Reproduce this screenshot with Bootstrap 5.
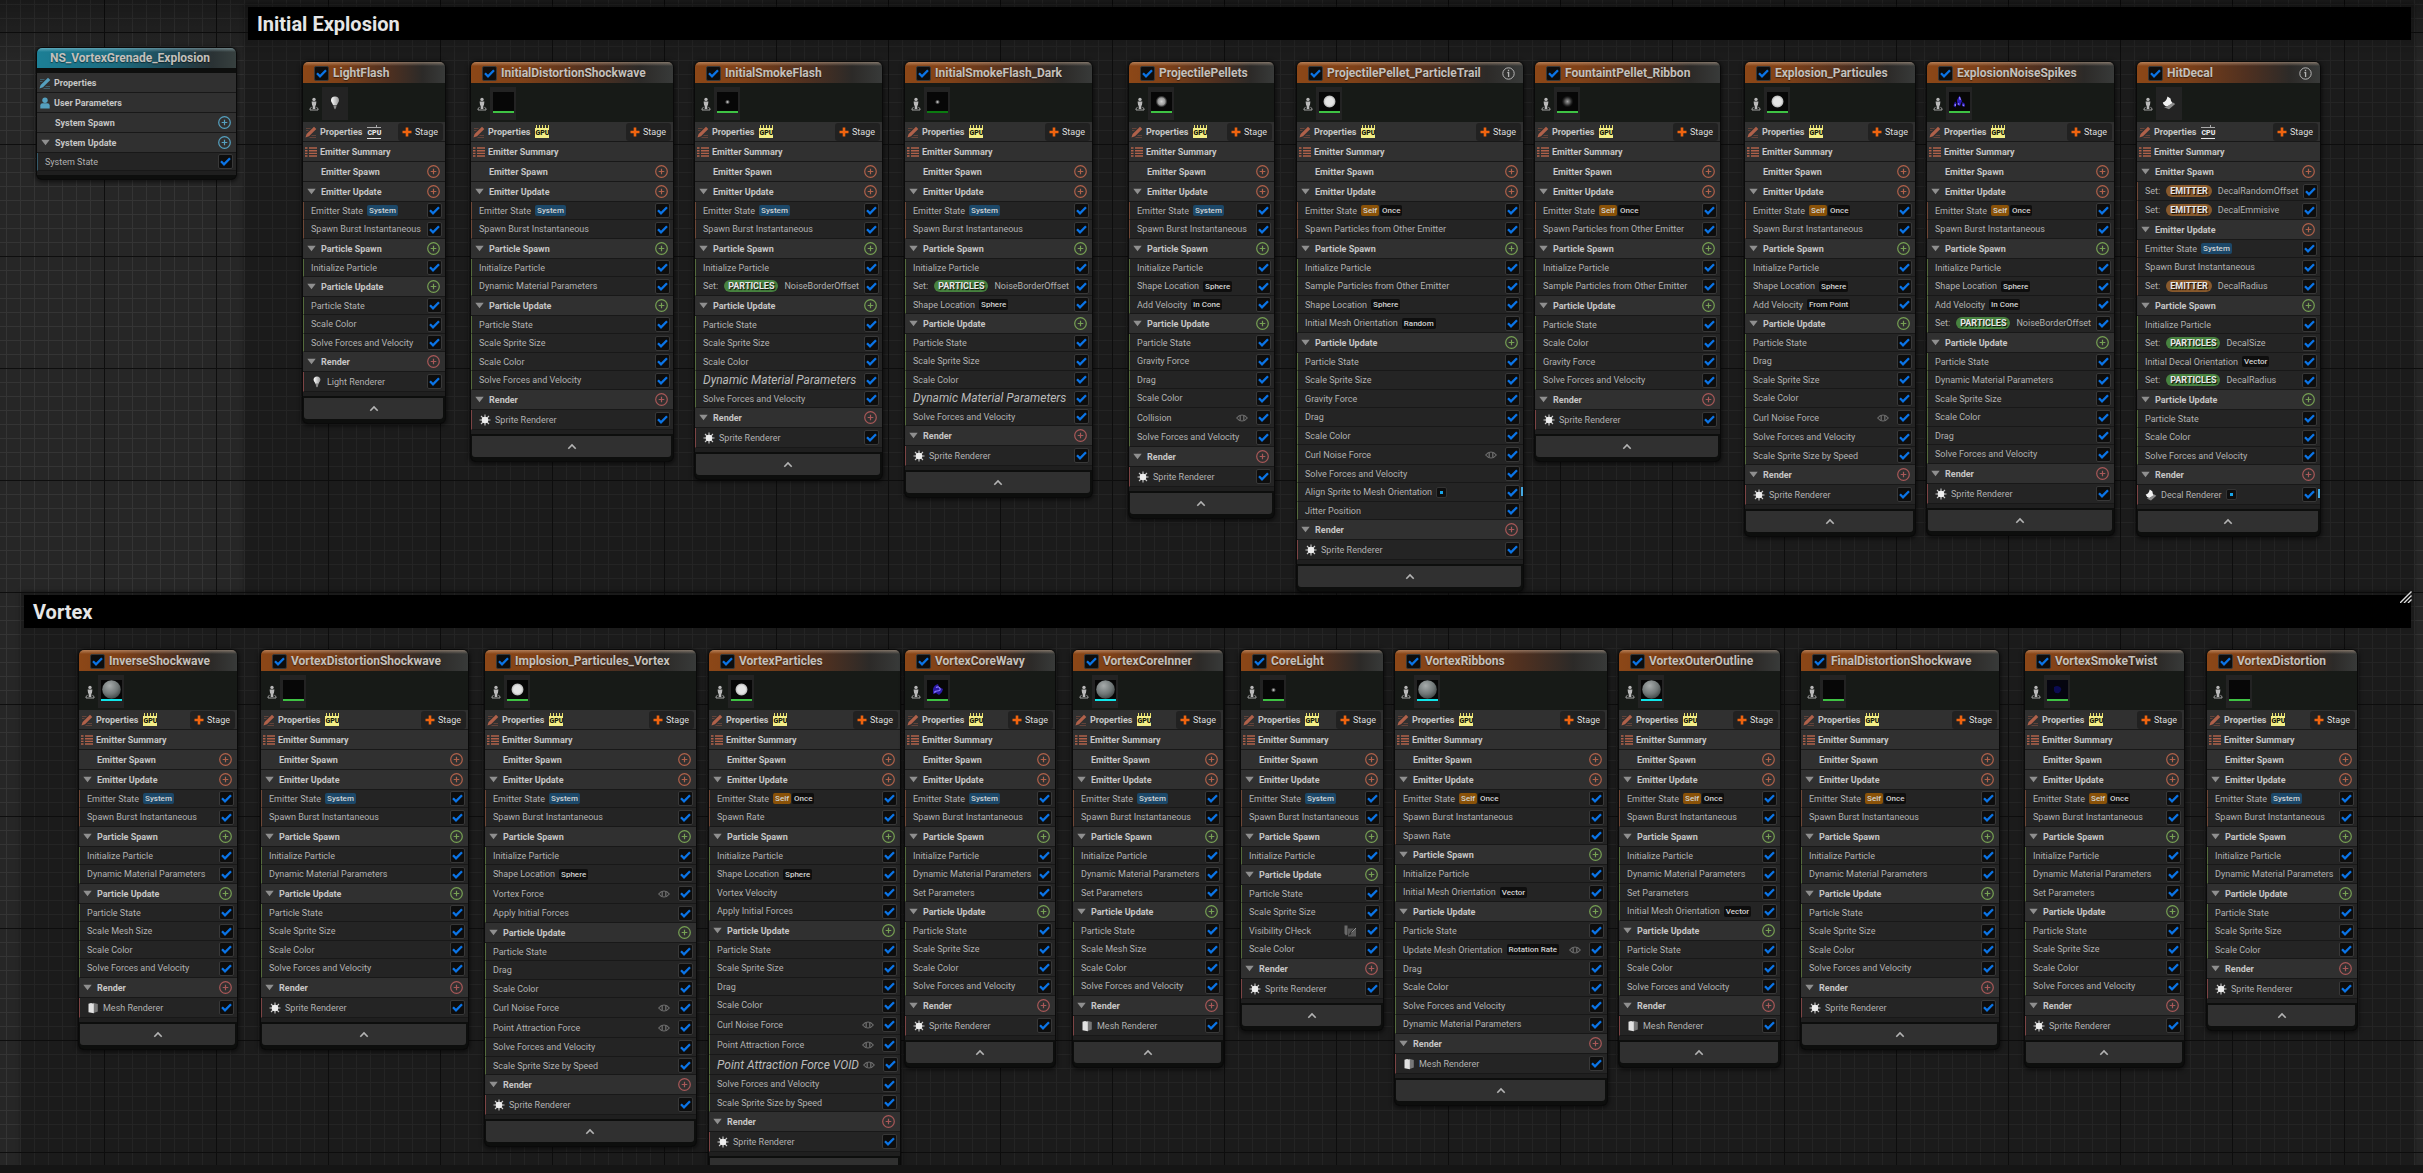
<!DOCTYPE html>
<html lang="en" data-bs-theme="dark">
<head>
<meta charset="utf-8">
<meta name="viewport" content="width=device-width, initial-scale=1">
<title>NS_VortexGrenade_Explosion</title>
<link rel="stylesheet" href="https://cdn.jsdelivr.net/npm/bootstrap@5.3.0/dist/css/bootstrap.min.css">
<style>
  :root { --emitter: #b0614a; --particle: #76a053; --render: #a85858; --system: #55a0bf; }
  body { font-family: Roboto, "Liberation Sans", sans-serif; font-size: 9px; line-height: 12px; color: #b2b2b2; background: #151515; }
  .graph {
    background-color: #262626;
    background-image:
      linear-gradient(rgba(0,0,0,.35), transparent 60px),
      linear-gradient(to right, #0e0e0e 1px, transparent 1px),
      linear-gradient(#0e0e0e 1px, transparent 1px),
      linear-gradient(to right, #343434 1px, transparent 1px),
      linear-gradient(#343434 1px, transparent 1px);
    background-size: auto, 112px 112px, 112px 112px, 14px 14px, 14px 14px;
    background-position: 0 0, 104px 0, 0 32px, 6px 0, 0 4px;
  }
  .status-strip { height: 8px; }
  /* comment boxes */
  .note-box { background: rgba(12,12,12,.4); box-shadow: 0 0 4px rgba(0,0,0,.5); right: 9px; }
  .note-a { left: 245px; top: 4px; height: 588px; }
  .note-b { left: 21px; top: 592px; bottom: 0; }
  .note-title { background: #000; color: #e6e6e6; font-size: 20px; line-height: 31px; margin: 3px 3px 0; padding: 2px 0 0 9px; font-weight: 700; }
  .grip { top: -1px; right: 2px; }
  /* nodes */
  .node { border-radius: 6px 6px 5px 5px; background: #0d0e0d; box-shadow: 0 0 0 1px #0a0a0a, 0 1px 4px 2px rgba(0,0,0,.55); padding-bottom: 4px; }
  .node-head { height: 21px; border-radius: 5px 5px 0 0; padding: 1px 0 0 11px; gap: 4px;
    background: linear-gradient(rgba(255,220,190,.38), rgba(255,220,190,0) 4px), linear-gradient(to right, #8c4717, #7f4118 25%, #4f3020 60%, #2c2a28 84%, #383a39); }
  .node-head h2, .sys-head h2 { font-size: 12px; line-height: 20px; font-weight: 700; color: #c4c0bc; text-shadow: 0 1px 1px rgba(0,0,0,.5); }
  .sys-head { height: 20px; border-radius: 5px 5px 0 0; padding-left: 13px; margin-bottom: 5px;
    background: linear-gradient(rgba(200,240,250,.38), rgba(200,240,250,0) 4px), linear-gradient(to right, #1c7f96, #1d6c80 40%, #1f4450 70%, #2a3234 88%, #37403f); }
  .preview { height: 39px; background: #171a17; padding: 4px 0 2px 6px; gap: 3px; }
  .preview-tile { width: 26px; background: #232323; padding-bottom: 2px; }
  .thumb { width: 21px; height: 21px; background: #070707; border-bottom: 2px solid #3fc244; }
  .thumb-cyan { border-color: #11e6ea; }
  .thumb-dim { border-color: #0b7a10; }
  .group-row, .mod-row { border-bottom: 1px solid #181818; white-space: nowrap; }
  .group-row { height: 20px; background: #303030; color: #c6c6c6; font-weight: 700; padding-right: 5px; }
  .group-row .lead-slot { width: 18px; padding-left: 4px; }
  .group-row .icon-slot { width: 17px; padding-left: 2px; }
  .icon-emitter { color: var(--emitter); }
  .icon-system { color: var(--system); }
  .mod-row { height: 18px; background: #242424; padding: 0 3px 0 7px; border-left: 1px solid var(--tone); gap: 4px; }
  .mod-row:nth-child(even), .mod-row.set-row { height: 19px; }
  .mod-row.debug-row, .mod-row.render-row { height: 20px; }
  .mod-row .ital { font-size: 12px; font-style: italic; color: #bcbcbc; }
  .tone-emitter { --tone: #6e4736; --ring: var(--emitter); }
  .tone-particle { --tone: #546a3c; --ring: var(--particle); }
  .tone-render { --tone: #7c4444; --ring: var(--render); }
  .tone-system { --tone: #33596a; --ring: var(--system); }
  .plain-btn { border: 0; padding: 0; background: none; color: #8f8f8f; line-height: 0; }
  .ring-btn { width: 13px; height: 13px; color: var(--ring); }
  .form-check-input.tick { width: 15px; height: 15px; margin: 0; border: 1px solid #383838; border-radius: 2px; background-color: #0d0d0d; }
  .form-check-input.tick:checked { background-color: #0d0d0d; border-color: #383838;
    background-size: 13px 13px; background-image: url("data:image/svg+xml,%3Csvg xmlns='http://www.w3.org/2000/svg' viewBox='0 0 13 13'%3E%3Cpath d='M2 6.3 5 9.4 11 3.2' fill='none' stroke='%230b74e6' stroke-width='2.3'/%3E%3C/svg%3E"); }
  .stage-btn { height: 18px; width: 45px; border: 0; border-radius: 3px; background: #212121; color: #dedede; padding: 0 5px 0 4px; margin-right: -3px; }
  .chip { font-size: 8px; line-height: 11px; border-radius: 2px; padding: 0 2px; background: #0e0e0e; color: #d2d2d2; font-weight: 500; }
  .chip-system { background: #1c4869; }
  .chip-self { background: #8a5208; }
  .chip + .chip { margin-left: -3px; }
  .pill { font-size: 9px; line-height: 12px; border-radius: 6px; padding: 0 4px; color: #e8e8e8; font-weight: 700; text-shadow: 1px 1px 1px #000; background: #47823f; margin: 0 2px; }
  .pill-emitter { background: #88592c; }
  .dot-chip { width: 11px; height: 11px; border-radius: 2px; background: #0e0e0e; border: 1px solid #333; }
  .dot-chip::after { content: ""; width: 3px; height: 3px; background: #19a5e8; }
  .edge-mark { right: 0; top: 4px; width: 2px; height: 9px; background: #45a9e2; }
  .sim-chip { font-size: 7px; line-height: 8px; width: 14px; height: 14px; padding-top: 4px; font-weight: 900; text-align: center; margin-left: 5px; }
  .sim-gpu { color: #15150a; background: repeating-linear-gradient(to right, transparent 0 1px, #e8df6a 1px 2px, transparent 2px 3px) 0 0/14px 3px no-repeat, linear-gradient(#f3ee86,#f3ee86) 0 3px/14px 10px no-repeat; }
  .sim-cpu { color: #e6e6e6; background: linear-gradient(#aaa,#aaa) 0 2px/14px 1px no-repeat, linear-gradient(#e6e6e6,#e6e6e6) 0 13px/14px 1px no-repeat, linear-gradient(#aaa,#aaa) 9px 0/1px 3px no-repeat; }
  .base-strip { height: 4px; background: #1f1f1f; margin-bottom: 2px; }
  .fold-btn { height: 21px; border: 0; border-radius: 0 0 3px 3px; background: #303030; color: #b4b4b4; margin: 0 2px 0 1px; padding: 0; line-height: 0; }
</style>
</head>
<body class="d-flex flex-column vh-100 overflow-hidden">

<svg width="0" height="0" class="position-absolute" aria-hidden="true">
  <defs>
    <radialGradient id="gBall"><stop offset=".6" stop-color="#e4e4e4"/><stop offset=".85" stop-color="#bbb"/><stop offset="1" stop-color="#888" stop-opacity="0"/></radialGradient>
    <radialGradient id="gDot"><stop offset="0" stop-color="#f0f0f0"/><stop offset="1" stop-color="#888" stop-opacity="0"/></radialGradient>
    <radialGradient id="gPuff"><stop offset="0" stop-color="#d0d0d0"/><stop offset=".6" stop-color="#999"/><stop offset="1" stop-color="#666" stop-opacity="0"/></radialGradient>
    <radialGradient id="gDim"><stop offset="0" stop-color="#a0a0a0"/><stop offset=".5" stop-color="#4a4a4a"/><stop offset="1" stop-color="#222" stop-opacity="0"/></radialGradient>
    <radialGradient id="gSphere" cx=".4" cy=".3" r=".75"><stop offset="0" stop-color="#a6abab"/><stop offset=".6" stop-color="#707777"/><stop offset="1" stop-color="#3a4040"/></radialGradient>
    <linearGradient id="gBulb"><stop offset="0" stop-color="#fff"/><stop offset="1" stop-color="#9a9a9a"/></linearGradient>
  </defs>
  <symbol id="i-person" viewBox="0 0 10 14"><circle cx="5" cy="2.4" r="1.7" fill="#b9b9b9"/><path d="M2.600 4.500h4.800L6.900 8.500H6.300V12H3.700V8.500H3.100z" fill="#b9b9b9"/><path d="M2.600 10.300 1 11.500v1.500h8v-1.500l-1.600-1.200" fill="none" stroke="#a2a2a2" stroke-width="1"/></symbol>
  <symbol id="i-pencil" viewBox="0 0 12 12"><path d="M.5 11.500 1.600 8 9 .800 11.300 3 4 10.300z" fill="currentColor"/><path d="M1 2.500h4.500M1 4.500h2.500M6.500 9.500H11M4.500 11.500H11" stroke="currentColor" opacity=".4" stroke-width="1"/></symbol>
  <symbol id="i-list" viewBox="0 0 12 10"><path d="M0 1h2.500M4 1h8M0 3.700h2.500M4 3.700h8M0 6.400h2.500M4 6.400h8M0 9h2.500M4 9h8" stroke="currentColor" stroke-width="1.400"/></symbol>
  <symbol id="i-user" viewBox="0 0 12 12"><circle cx="6" cy="3.200" r="2.700" fill="currentColor"/><path d="M1.300 11.500V8.600Q1.300 6.300 3.600 6.300H8.400Q10.700 6.300 10.700 8.600v2.900z" fill="currentColor"/></symbol>
  <symbol id="i-caret" viewBox="0 0 9 7"><path d="M.3.800h8.400L4.500 6.200z" fill="currentColor"/></symbol>
  <symbol id="i-ring" viewBox="0 0 13 13"><circle cx="6.500" cy="6.500" r="5.800" fill="none" stroke="currentColor" stroke-width="1.200"/><path d="M6.500 3.700v5.600M3.700 6.500h5.600" stroke="currentColor" stroke-width="1.200"/></symbol>
  <symbol id="i-plus" viewBox="0 0 10 10"><path d="M5 .5v9M.5 5h9" stroke="#f0640f" stroke-width="2.600"/></symbol>
  <symbol id="i-up" viewBox="0 0 10 7"><path d="M1.300 5.700 5 2l3.700 3.700" fill="none" stroke="currentColor" stroke-width="1.600"/></symbol>
  <symbol id="i-info" viewBox="0 0 13 13"><circle cx="6.500" cy="6.500" r="5.700" fill="none" stroke="#b5b5b5"/><path d="M6.500 2.800v1.500M5.300 5.700h1.300v4.200" fill="none" stroke="#b5b5b5" stroke-width="1.300"/></symbol>
  <symbol id="i-eye" viewBox="0 0 12 8"><path d="M.7 4Q3 1 6 1T11.300 4Q9 7 6 7T.7 4z" fill="none" stroke="#6d6d6d" stroke-width="1.200"/><path d="M4.200 2v4M7.800 2v4" stroke="#6d6d6d" stroke-width="1.300"/></symbol>
  <symbol id="i-pad" viewBox="0 0 13 12"><path d="M.5.500h3v9l-1.500 1-1.500-2z" fill="#6a6a6a"/><path d="M4 3.500h8v8H4z" fill="#585858"/><path d="M5.500 10 7 7.500 11.500 3" stroke="#2a2a2a" stroke-width="1.400" fill="none"/><path d="m7.500 7.500 4.500-4.500" stroke="#929292" stroke-width="1"/></symbol>
  <symbol id="i-sprite" viewBox="0 0 12 12"><path d="M6 .5v11M.5 6h11M2 2l8 8M10 2l-8 8" stroke="#c9c9c9" stroke-width="1.100"/><circle cx="6" cy="6" r="3.300" fill="#ededed"/></symbol>
  <symbol id="i-mesh" viewBox="0 0 12 12"><path d="M6 .8 10.800 2v7.600L6 11.200z" fill="#777"/><path d="M1.500 1.800 4 1l2.800.800v9.400l-5.300-1z" fill="#e2e2e2"/></symbol>
  <symbol id="i-bulb" viewBox="0 0 10 14"><path d="M5 .5C7.600.5 9 2.200 9 4.200 9 6.300 7.300 7.300 7 9H3C2.700 7.300 1 6.300 1 4.200 1 2.200 2.400.5 5 .5z" fill="url(#gBulb)"/><path d="M3.300 9.300h3.400L6 12l-1 1.500L4 12z" fill="#8a8a8a"/></symbol>
  <symbol id="i-decal" viewBox="0 0 14 14"><path d="M5.500.5 8.500 2.500Q8.500 5.500 11 7.500L5 10.500Q1.500 9.500.800 6.500 4.500 5.500 5.500.5z" fill="#f2f2f2"/><path d="M11 6.500 13.200 8 7 13.300 2 11.200 5 10.500z" fill="#8c8c8c"/></symbol>
  <symbol id="t-none" viewBox="0 0 21 19"></symbol>
  <symbol id="t-dot" viewBox="0 0 21 19"><circle cx="10.500" cy="10" r="2.600" fill="url(#gDot)"/></symbol>
  <symbol id="t-puff" viewBox="0 0 21 19"><circle cx="10.500" cy="9.500" r="6" fill="url(#gPuff)"/></symbol>
  <symbol id="t-ball" viewBox="0 0 21 19"><circle cx="10.500" cy="9.500" r="6.500" fill="url(#gBall)"/></symbol>
  <symbol id="t-dim" viewBox="0 0 21 19"><circle cx="10.500" cy="9.500" r="6" fill="url(#gDim)"/></symbol>
  <symbol id="t-sphere" viewBox="0 0 21 19"><circle cx="10.500" cy="9.500" r="9.300" fill="url(#gSphere)"/></symbol>
  <symbol id="t-spikes" viewBox="0 0 21 19"><path d="M10.500 3.500 13 9 11 14 8.500 13 8 8zM6 9.500l1.500 2-1 4-2-1.500zM13.500 10l2.500 2-.500 3-2.500-1z" fill="#2d1bb8"/><path d="M10.500 5 11.300 8M9 11.500 10.300 12.500M13.800 12.500 15 14M6.300 12v2" stroke="#9a8cff" stroke-width="1.200"/></symbol>
  <symbol id="t-wavy" viewBox="0 0 21 19"><path d="M6 9q1-4 5-5l1 3 4 2-1 3-3 3-3-2-3 1z" fill="#2c1aa5"/><path d="M9 7.500q3-1.500 4 1t-3 2.500q-3 0-2 2" fill="none" stroke="#8b7cff" stroke-width="1.200"/></symbol>
  <symbol id="t-twist" viewBox="0 0 21 19"><rect width="21" height="19" fill="#05050f"/><path d="M7 7q3-2 6 0t-1 6q-4 1-5-2z" fill="#0b0b52"/></symbol>
</svg>

<main class="graph position-relative flex-grow-1 overflow-hidden" id="graph">
  <section class="note-box note-a position-absolute"><h1 class="note-title">Initial Explosion</h1></section>
  <section class="note-box note-b position-absolute"><h1 class="note-title">Vortex</h1>
    <svg class="grip position-absolute" width="12" height="12" viewBox="0 0 12 12"><path d="M0 12 11.500.5M4 12l7.500-7.500M8 12l3.500-3.500" stroke="#ddd" stroke-width="1.400"/></svg>
  </section>
</main>
<footer class="status-strip flex-shrink-0"></footer>

<script>
// Module strings: "Name", "Name [Tag]", "Set EMITTER Name"; suffix ~ debug eye, ! scratch pad, @ changed mark; prefix / renamed (italic)
const SYS = 'Emitter State [System]', SELF = 'Emitter State [Self] [Once]', BURST = 'Spawn Burst Instantaneous';
const INIT = 'Initialize Particle', DYN = 'Dynamic Material Parameters', STATE = 'Particle State', SPRITE = 'Scale Sprite Size',
      MESH = 'Scale Mesh Size', COLOR = 'Scale Color', SOLVE = 'Solve Forces and Velocity', SPEED = 'Scale Sprite Size by Speed',
      SETP = 'Set Parameters', SPHERE = 'Shape Location [Sphere]', NOISE = 'Set PARTICLES NoiseBorderOffset', OTHER = 'Spawn Particles from Other Emitter',
      SAMPLE = 'Sample Particles from Other Emitter';
// title, x, width, thumbnail, emitter update, particle spawn, particle update, renderer, options
const rows = [
  { y: 62, emitters: [
    ['LightFlash', 303, 142, 'bulb', [SYS, BURST], [INIT], [STATE, COLOR, SOLVE], 'Light', { cpu: 1 }],
    ['InitialDistortionShockwave', 471, 202, 'none', [SYS, BURST], [INIT, DYN], [STATE, SPRITE, COLOR, SOLVE], 'Sprite'],
    ['InitialSmokeFlash', 695, 187, 'dot', [SYS, BURST], [INIT, NOISE], [STATE, SPRITE, COLOR, '/' + DYN, SOLVE], 'Sprite'],
    ['InitialSmokeFlash_Dark', 905, 187, 'dot', [SYS, BURST], [INIT, NOISE, SPHERE], [STATE, SPRITE, COLOR, '/' + DYN, SOLVE], 'Sprite', { bar: 'thumb-dim' }],
    ['ProjectilePellets', 1129, 145, 'puff', [SYS, BURST], [INIT, SPHERE, 'Add Velocity [In Cone]'], [STATE, 'Gravity Force', 'Drag', COLOR, 'Collision~', SOLVE], 'Sprite'],
    ['ProjectilePellet_ParticleTrail', 1297, 226, 'ball', [SELF, OTHER], [INIT, SAMPLE, SPHERE, 'Initial Mesh Orientation [Random]'],
      [STATE, SPRITE, 'Gravity Force', 'Drag', COLOR, 'Curl Noise Force~', SOLVE, 'Align Sprite to Mesh Orientation@', 'Jitter Position'], 'Sprite', { info: 1 }],
    ['FountaintPellet_Ribbon', 1535, 185, 'dim', [SELF, OTHER], [INIT, SAMPLE], [STATE, COLOR, 'Gravity Force', SOLVE], 'Sprite'],
    ['Explosion_Particules', 1745, 170, 'ball', [SELF, BURST], [INIT, SPHERE, 'Add Velocity [From Point]'], [STATE, 'Drag', SPRITE, COLOR, 'Curl Noise Force~', SOLVE, SPEED], 'Sprite'],
    ['ExplosionNoiseSpikes', 1927, 187, 'spikes', [SELF, BURST], [INIT, SPHERE, 'Add Velocity [In Cone]', NOISE], [STATE, DYN, SPRITE, COLOR, 'Drag', SOLVE], 'Sprite'],
    ['HitDecal', 2137, 183, 'decal', [SYS, BURST, 'Set EMITTER DecalRadius'], [INIT, 'Set PARTICLES DecalSize', 'Initial Decal Orientation [Vector]', 'Set PARTICLES DecalRadius'],
      [STATE, COLOR, SOLVE], 'Decal', { cpu: 1, info: 1, changed: 1, spawn: ['Set EMITTER DecalRandomOffset', 'Set EMITTER DecalEmmisive'] }],
  ]},
  { y: 650, emitters: [
    ['InverseShockwave', 79, 158, 'sphere', [SYS, BURST], [INIT, DYN], [STATE, MESH, COLOR, SOLVE], 'Mesh'],
    ['VortexDistortionShockwave', 261, 207, 'none', [SYS, BURST], [INIT, DYN], [STATE, SPRITE, COLOR, SOLVE], 'Sprite'],
    ['Implosion_Particules_Vortex', 485, 211, 'ball', [SYS, BURST], [INIT, SPHERE, 'Vortex Force~', 'Apply Initial Forces'],
      [STATE, 'Drag', COLOR, 'Curl Noise Force~', 'Point Attraction Force~', SOLVE, SPEED], 'Sprite'],
    ['VortexParticles', 709, 191, 'ball', [SELF, 'Spawn Rate'], [INIT, SPHERE, 'Vortex Velocity', 'Apply Initial Forces'],
      [STATE, SPRITE, 'Drag', COLOR, 'Curl Noise Force~', 'Point Attraction Force~', '/Point Attraction Force VOID~', SOLVE, SPEED], 'Sprite'],
    ['VortexCoreWavy', 905, 150, 'wavy', [SYS, BURST], [INIT, DYN, SETP], [STATE, SPRITE, COLOR, SOLVE], 'Sprite'],
    ['VortexCoreInner', 1073, 150, 'sphere', [SYS, BURST], [INIT, DYN, SETP], [STATE, MESH, COLOR, SOLVE], 'Mesh'],
    ['CoreLight', 1241, 142, 'dot', [SYS, BURST], [INIT], [STATE, SPRITE, 'Visibility CHeck!', COLOR], 'Sprite'],
    ['VortexRibbons', 1395, 212, 'sphere', [SELF, BURST, 'Spawn Rate'], [INIT, 'Initial Mesh Orientation [Vector]'],
      [STATE, 'Update Mesh Orientation [Rotation Rate]~', 'Drag', COLOR, SOLVE, DYN], 'Mesh'],
    ['VortexOuterOutline', 1619, 161, 'sphere', [SELF, BURST], [INIT, DYN, SETP, 'Initial Mesh Orientation [Vector]'], [STATE, COLOR, SOLVE], 'Mesh'],
    ['FinalDistortionShockwave', 1801, 198, 'none', [SELF, BURST], [INIT, DYN], [STATE, SPRITE, COLOR, SOLVE], 'Sprite'],
    ['VortexSmokeTwist', 2025, 159, 'twist', [SELF, BURST], [INIT, DYN, SETP], [STATE, SPRITE, COLOR, SOLVE], 'Sprite'],
    ['VortexDistortion', 2207, 150, 'none', [SYS, BURST], [INIT, DYN], [STATE, SPRITE, COLOR], 'Sprite'],
  ]},
];

let uid = 0;
const icon = (id, w, h) => `<svg width="${w}" height="${h}" class="flex-shrink-0" aria-hidden="true"><use href="#${id}"/></svg>`;
const tick = (id, label = '') => `<input class="form-check-input tick flex-shrink-0" type="checkbox" id="${id}" ${label && `aria-label="${label}"`} checked>`;

function moduleRow(text) {
  const id = 'm' + (++uid);
  const eye = text.includes('~'), pad = text.includes('!'), mark = text.includes('@'), ital = text[0] === '/';
  text = text.replace(/[~!@/]/g, '');
  const tags = [...text.matchAll(/\[(.+?)\]/g)].map(m => `<span class="chip chip-${m[1].split(' ')[0].toLowerCase()}">${m[1]}</span>`).join('');
  const name = text.replace(/ \[.+/, '');
  const set = name.match(/^Set ([A-Z]+) (.+)/);
  const label = set
    ? `<label class="d-flex align-items-center" for="${id}"><span class="me-1">Set:</span><span class="pill pill-${set[1].toLowerCase()}">${set[1]}</span><span class="ms-1">${set[2]}</span></label>`
    : `<label for="${id}"${ital ? ' class="ital"' : ''}>${name}</label>`;
  return `<li class="mod-row position-relative d-flex align-items-center${set ? ' set-row' : ''}${eye ? ' debug-row' : ''}">${label}${tags}
    ${mark ? '<span class="dot-chip d-flex align-items-center justify-content-center"></span><span class="edge-mark position-absolute"></span>' : ''}
    <span class="ms-auto d-flex align-items-center gap-2">${eye ? icon('i-eye', 12, 8) : ''}${pad ? icon('i-pad', 13, 12) : ''}${tick(id)}</span></li>`;
}
function group(title, tone, mods) {
  return `<section class="tone-${tone}">
    <div class="group-row d-flex align-items-center"><span class="lead-slot d-flex">${mods.length ? `<button class="plain-btn" type="button" aria-label="Collapse ${title}">${icon('i-caret', 9, 7)}</button>` : ''}</span>${title}
    <button class="plain-btn ring-btn ms-auto" type="button" aria-label="Add to ${title}">${icon('i-ring', 13, 13)}</button></div>
    ${mods.length ? `<ul class="list-unstyled mb-0">${mods.map(moduleRow).join('')}</ul>` : ''}</section>`;
}
function emitter([title, x, w, thumb, update, spawn, pupdate, renderer, o = {}], y) {
  const rid = 'm' + (++uid);
  const flat = thumb === 'bulb' || thumb === 'decal';
  return `<article class="node position-absolute" style="left:${x}px;top:${y}px;width:${w}px">
    <header class="node-head d-flex align-items-center">${tick('n' + uid, 'Enable ' + title)}<h2 class="mb-0">${title}</h2>
      ${o.info ? `<span class="ms-auto d-flex pe-2">${icon('i-info', 13, 13)}</span>` : ''}</header>
    <div class="preview d-flex align-items-center">${icon('i-person', 10, 14)}
      <span class="preview-tile d-flex align-items-center justify-content-center align-self-stretch">${flat
        ? icon('i-' + thumb, 14, 14)
        : `<span class="thumb d-flex ${thumb === 'sphere' ? 'thumb-cyan' : ''} ${o.bar || ''}">${icon('t-' + thumb, 21, 19)}</span>`}</span></div>
    <div class="group-row d-flex align-items-center"><span class="icon-slot icon-emitter d-flex">${icon('i-pencil', 12, 12)}</span>Properties
      <span class="sim-chip ${o.cpu ? 'sim-cpu' : 'sim-gpu'}">${o.cpu ? 'CPU' : 'GPU'}</span>
      <button class="stage-btn ms-auto d-flex align-items-center justify-content-between" type="button">${icon('i-plus', 10, 10)}Stage</button></div>
    <div class="group-row d-flex align-items-center"><span class="icon-slot icon-emitter d-flex">${icon('i-list', 12, 10)}</span>Emitter Summary</div>
    ${group('Emitter Spawn', 'emitter', o.spawn || [])}
    ${group('Emitter Update', 'emitter', update)}
    ${group('Particle Spawn', 'particle', spawn)}
    ${group('Particle Update', 'particle', pupdate)}
    <section class="tone-render">
      <div class="group-row d-flex align-items-center"><span class="lead-slot d-flex"><button class="plain-btn" type="button" aria-label="Collapse Render">${icon('i-caret', 9, 7)}</button></span>Render
        <button class="plain-btn ring-btn ms-auto" type="button" aria-label="Add renderer">${icon('i-ring', 13, 13)}</button></div>
      <div class="mod-row render-row position-relative d-flex align-items-center">${icon({ Light: 'i-bulb', Sprite: 'i-sprite', Mesh: 'i-mesh', Decal: 'i-decal' }[renderer], 12, 12)}
        <label for="${rid}">${renderer} Renderer</label>${o.changed ? '<span class="dot-chip d-flex align-items-center justify-content-center"></span><span class="edge-mark position-absolute"></span>' : ''}
        <span class="ms-auto d-flex">${tick(rid)}</span></div>
    </section>
    <div class="base-strip"></div>
    <div class="d-grid"><button class="fold-btn" type="button" aria-label="Fold ${title}">${icon('i-up', 10, 7)}</button></div>
  </article>`;
}
const system = `<article class="node position-absolute" style="left:37px;top:48px;width:199px">
  <header class="sys-head"><h2 class="mb-0">NS_VortexGrenade_Explosion</h2></header>
  <div class="group-row d-flex align-items-center"><span class="icon-slot icon-system d-flex">${icon('i-pencil', 12, 12)}</span>Properties</div>
  <div class="group-row d-flex align-items-center"><span class="icon-slot icon-system d-flex">${icon('i-user', 12, 12)}</span>User Parameters</div>
  ${group('System Spawn', 'system', [])}${group('System Update', 'system', ['System State'])}
  <div class="base-strip mb-0"></div></article>`;
document.getElementById('graph').insertAdjacentHTML('beforeend',
  system + rows.map(r => r.emitters.map(e => emitter(e, r.y)).join('')).join(''));
</script>
<script src="https://cdn.jsdelivr.net/npm/bootstrap@5.3.0/dist/js/bootstrap.bundle.min.js"></script>
</body>
</html>
